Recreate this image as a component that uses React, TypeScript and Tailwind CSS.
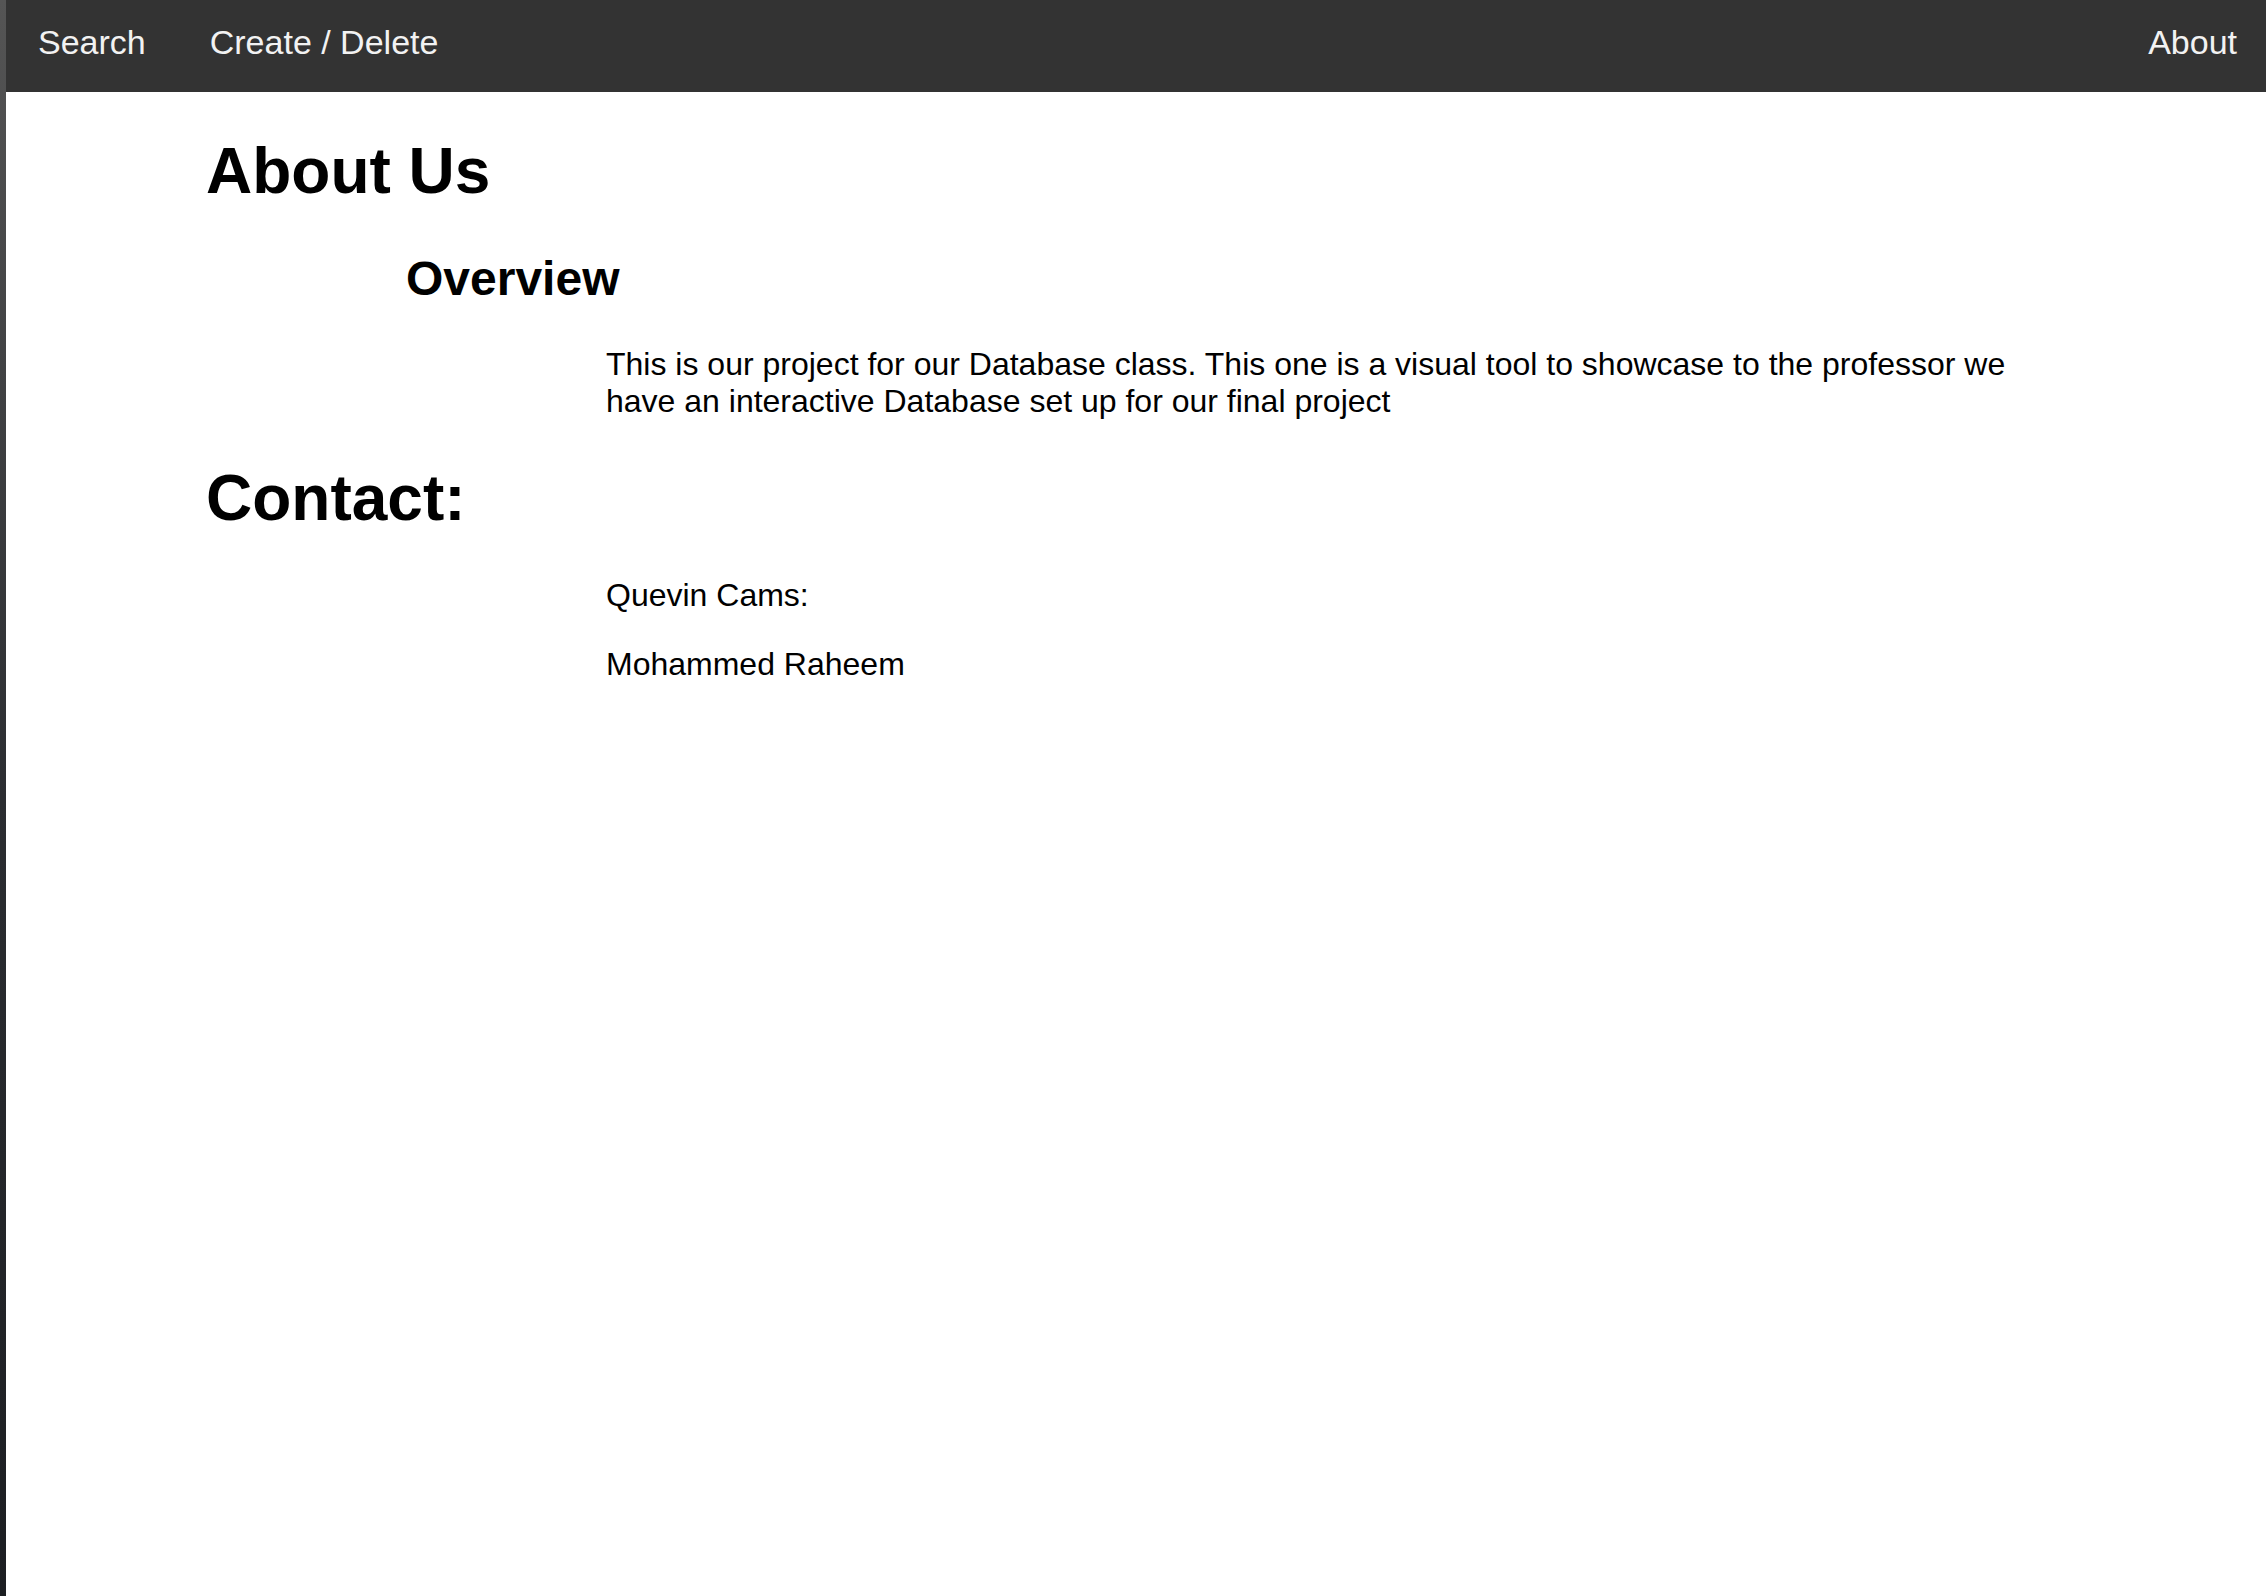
const NavLink = ({ label, last }: { label: string; last?: boolean }) => (
  <a
    href="#"
    className={
      last
        ? "block pl-[32px] pr-[29px] pt-[24px] pb-[32px] text-[34px] leading-[36px] text-[#f2f2f2] no-underline"
        : "block px-[32px] pt-[24px] pb-[32px] text-[34px] leading-[36px] text-[#f2f2f2] no-underline"
    }
  >
    {label}
  </a>
);

const App = () => {
  return (
    <div
      className="flex min-h-screen bg-white text-black"
      style={{ fontFamily: '"Liberation Sans", Arial, sans-serif' }}
    >
      {/* window edge */}
      <div className="w-[6px] shrink-0 bg-gradient-to-b from-[#555555] via-[#2b2d31] to-[#1c1e22]" />

      <div className="flex-1 min-w-0">
        {/* Top nav */}
        <nav className="flex h-[92px] bg-[#333333]">
          <NavLink label="Search" />
          <NavLink label="Create / Delete" />
          <div className="ml-auto">
            <NavLink label="About" last />
          </div>
        </nav>

        {/* Content */}
        <main className="pl-[200px] pr-[200px]">
          <h1 className="mt-[42px] text-[64px] leading-[74px] font-bold">About Us</h1>

          <div className="pl-[200px]">
            <h2 className="mt-[43px] text-[48px] leading-[55px] font-bold">Overview</h2>
            <p className="mt-[40px] pl-[200px] text-[32px] leading-[37px]">
              This is our project for our Database class. This one is a visual tool to showcase to the
              professor we have an interactive Database set up for our final project
            </p>
          </div>

          <h1 className="mt-[41px] text-[64px] leading-[74px] font-bold">Contact:</h1>

          <div className="pl-[400px] text-[32px] leading-[37px]">
            <p className="mt-[42px]">Quevin Cams:</p>
            <p className="mt-[32px]">Mohammed Raheem</p>
          </div>
        </main>
      </div>
    </div>
  );
};

export default App;
